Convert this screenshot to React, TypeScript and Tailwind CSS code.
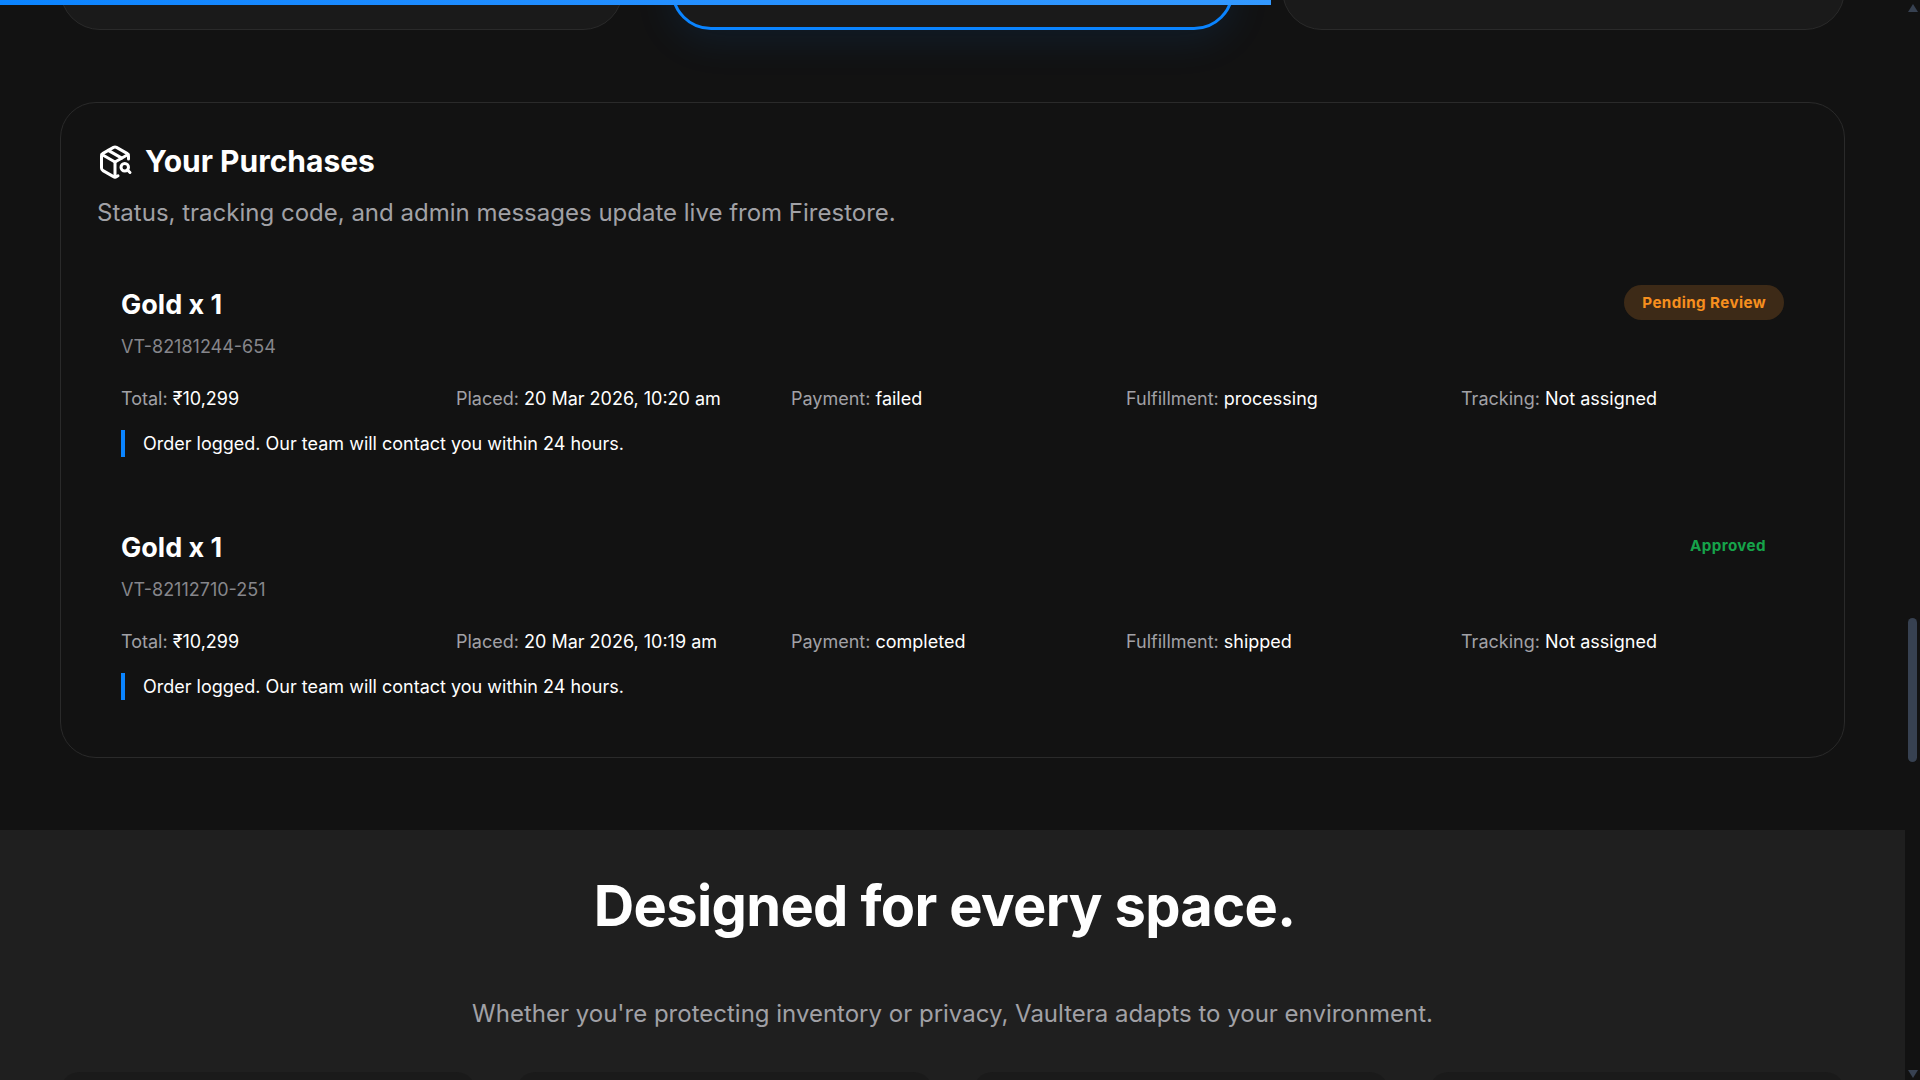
const sans = "font-['Inter','Noto_Sans',sans-serif]";

function PackageSearchIcon() {
  return (
    <svg width="36" height="36" viewBox="0 0 24 24" fill="none" stroke="currentColor" strokeWidth="2" strokeLinecap="round" strokeLinejoin="round" className="text-white shrink-0">
      <path d="M21 10V8a2 2 0 0 0-1-1.73l-7-4a2 2 0 0 0-2 0l-7 4A2 2 0 0 0 3 8v8a2 2 0 0 0 1 1.73l7 4a2 2 0 0 0 2 0l1-.58" />
      <path d="m7.5 4.27 9 5.15" />
      <path d="M3.29 7 12 12l8.71-5" />
      <path d="M12 22V12" />
      <circle cx="18.5" cy="15.5" r="2.5" />
      <path d="M20.27 17.27 22 19" />
    </svg>
  );
}

function Meta({ label, value }: { label: string; value: string }) {
  return (
    <div className="text-[18px] leading-[27px] text-[#a1a1a6]">
      {label} <span className="text-white">{value}</span>
    </div>
  );
}

function Order({ id, date, payment, fulfillment, pending }: { id: string; date: string; payment: string; fulfillment: string; pending: boolean }) {
  return (
    <div className="flex flex-col">
      <div className="flex items-start justify-between">
        <div className="flex flex-col">
          <h3 className="text-[27px] leading-[39px] font-bold text-white">Gold x 1</h3>
          <p className="mt-[9px] text-[18px] leading-[27px] text-[#86868b]">{id}</p>
        </div>
        <span className={pending
          ? "rounded-full bg-[#3d2a17] px-[18px] py-[6px] text-[15.2px] leading-[23px] font-bold tracking-[0.4px] text-[#f78f1e]"
          : "rounded-full px-[18px] py-[6px] text-[15.2px] leading-[23px] font-bold tracking-[0.4px] text-[#16a34a]"}>
          {pending ? "Pending Review" : "Approved"}
        </span>
      </div>
      <div className="mt-[25px] grid grid-cols-5 gap-x-[12px]">
        <Meta label="Total:" value="₹10,299" />
        <Meta label="Placed:" value={date} />
        <Meta label="Payment:" value={payment} />
        <Meta label="Fulfillment:" value={fulfillment} />
        <Meta label="Tracking:" value="Not assigned" />
      </div>
      <p className="mt-[18px] border-l-4 border-[#0a84ff] pl-[18px] text-[18px] leading-[27px] text-white">
        Order logged. Our team will contact you within 24 hours.
      </p>
    </div>
  );
}

export default function App() {
  return (
    <div className={`${sans} relative flex h-screen overflow-hidden bg-[#121212]`}>
      <div className="absolute left-0 top-0 z-10 h-[5px] w-[1271px] bg-gradient-to-r from-[#0a84ff] to-[#3399ff]" />
      <main className="w-[1905px] shrink-0">
        <div className="mx-[60px] -mt-[50px] grid grid-cols-3 gap-[48px]">
          <div className="h-[80px] rounded-[40px] border border-[#2a2a2a] bg-[#1a1a1a]" />
          <div className="h-[80px] rounded-[40px] border-[3px] border-[#0a84ff] bg-[#1a1a1a] shadow-[0_10px_40px_rgba(10,132,255,0.1)]" />
          <div className="h-[80px] rounded-[40px] border border-[#2a2a2a] bg-[#1a1a1a]" />
        </div>
        <section className="mx-[60px] mt-[72px] h-[656px] rounded-[36px] border border-[#2a2a2a] bg-[#121212] px-[36px] pt-[36px]">
          <div className="flex items-center gap-[12px]">
            <PackageSearchIcon />
            <h2 className="text-[30px] leading-[45px] font-bold text-white">Your Purchases</h2>
          </div>
          <p className="mt-[11px] text-[24px] leading-[36px] text-[#a1a1a6]">
            Status, tracking code, and admin messages update live from Firestore.
          </p>
          <div className="mx-[24px] mt-[54px] flex flex-col gap-[71px]">
            <Order id="VT-82181244-654" date="20 Mar 2026, 10:20 am" payment="failed" fulfillment="processing" pending />
            <Order id="VT-82112710-251" date="20 Mar 2026, 10:19 am" payment="completed" fulfillment="shipped" pending={false} />
          </div>
        </section>
        <section className="mt-[72px] h-[250px] bg-[#1f1f1f] pt-[42px] text-center">
          <h2 className="pr-[16px] text-[56px] leading-[68px] font-bold tracking-[-0.64px] text-white">Designed for every space.</h2>
          <p className="mt-[56px] text-[24px] leading-[36px] text-[#a1a1a6]">
            Whether you're protecting inventory or privacy, Vaultera adapts to your environment.
          </p>
          <div className="mx-[60px] mt-[40px] grid grid-cols-4 gap-[40px]">
            <div className="h-[40px] rounded-[36px] bg-[#1a1a1a]" />
            <div className="h-[40px] rounded-[36px] bg-[#1a1a1a]" />
            <div className="h-[40px] rounded-[36px] bg-[#1a1a1a]" />
            <div className="h-[40px] rounded-[36px] bg-[#1a1a1a]" />
          </div>
        </section>
      </main>
      <aside className="relative flex w-[15px] shrink-0 flex-col items-center bg-[#121212]">
        <svg width="10" height="8" viewBox="0 0 10 8" className="mt-[4px] fill-[#374151]"><path d="M5 0l5 8H0z" /></svg>
        <div className="mt-[606px] h-[144px] w-[9px] rounded-full bg-[#374151]" />
        <svg width="10" height="8" viewBox="0 0 10 8" className="mt-[308px] fill-[#374151]"><path d="M0 0h10L5 8z" /></svg>
      </aside>
    </div>
  );
}
